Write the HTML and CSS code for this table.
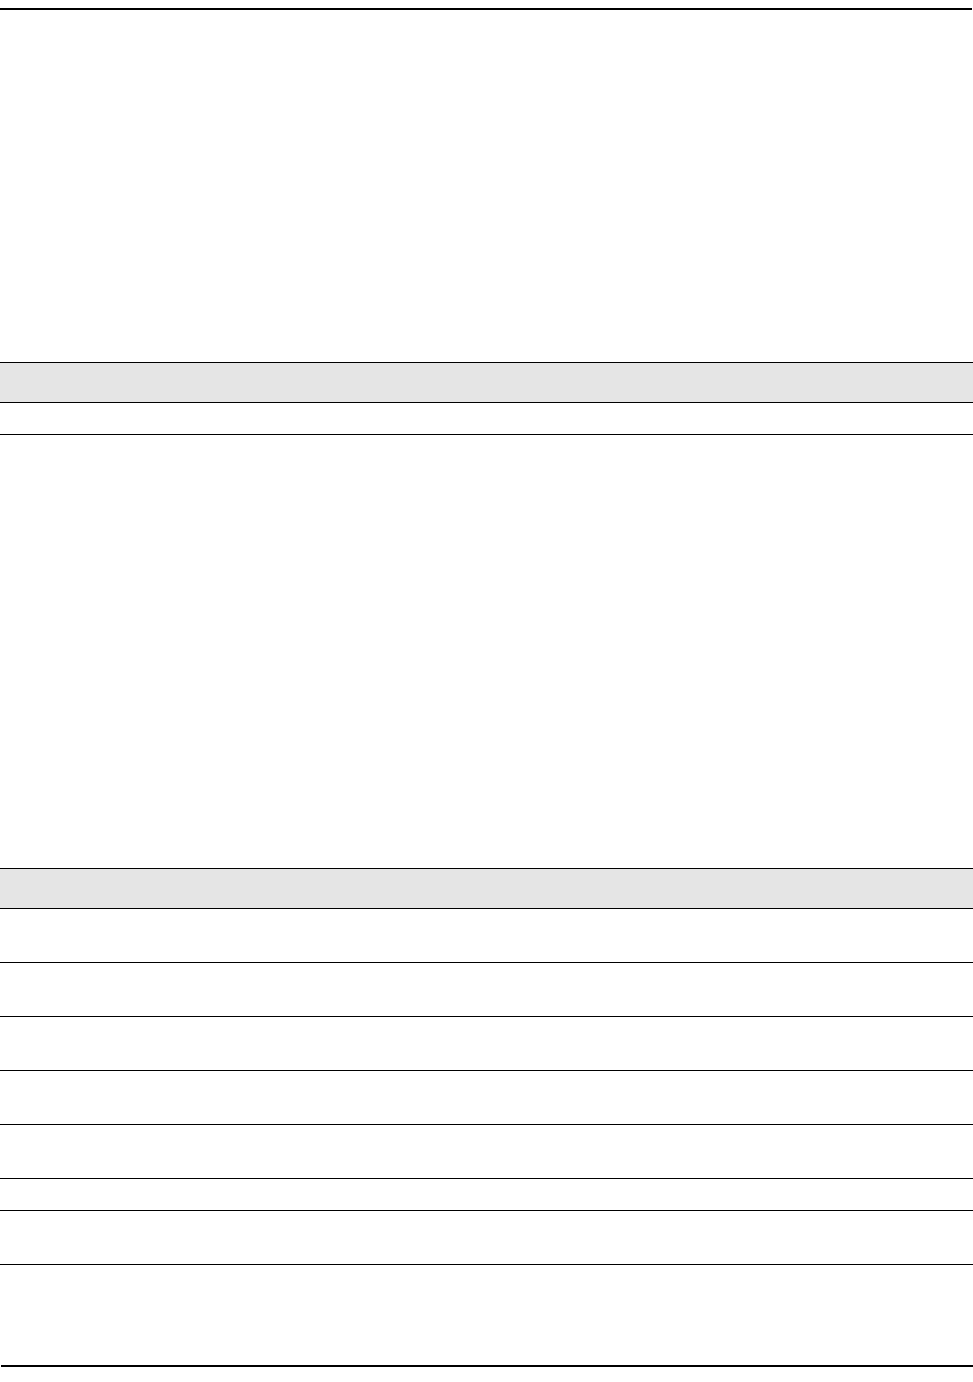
FILE: index.html
```html
<html>
<head>
<meta charset="utf-8">
<link rel="stylesheet" href="styles.css">
</head>
<body>
<div class="page">
	<div class="rule top"></div>
	<div class="block first">
		<div class="thead"></div>
		<div class="row short"></div>
	</div>
	<div class="block second">
		<div class="thead"></div>
		<div class="row"></div>
		<div class="row"></div>
		<div class="row"></div>
		<div class="row"></div>
		<div class="row"></div>
		<div class="row short"></div>
		<div class="row"></div>
	</div>
	<div class="rule bottom"></div>
</div>
</body>
</html>
```
FILE: styles.css
```css
body {
	margin: 0;
	background-color: white;
	color: black;
	font-family: 'Liberation Sans', Arial, sans-serif;
	font-size: 14px;
}

.page {
	display: flex;
	flex-flow: column;
	width: 973px;
}

.rule {
	height: 2px;
	background-color: black;
}
.rule.top {
	margin-top: 8px;
	margin-right: 1px;
}
.rule.bottom {
	margin-top: 100px;
	margin-left: 1px;
}

.block {
	display: flex;
	flex-flow: column;
}
.block.first {
	margin-top: 352px;
}
.block.second {
	margin-top: 433px;
}

.thead {
	height: 39px;
	background-color: #e5e5e5;
	border-top: 1px solid black;
	border-bottom: 1px solid black;
}
.row {
	height: 53px;
	border-bottom: 1px solid black;
}
.row.short {
	height: 31px;
}
```
